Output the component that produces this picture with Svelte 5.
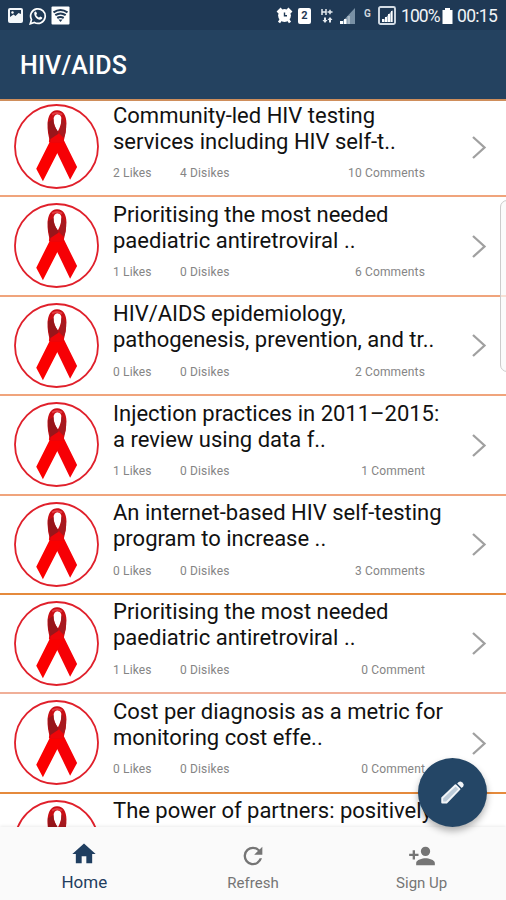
<script>
	const posts = [
		{ lines: ['Community-led HIV testing', 'services including HIV self-t..'], likes: 2, dislikes: 4, comments: 10 },
		{ lines: ['Prioritising the most needed', 'paediatric antiretroviral ..'], likes: 1, dislikes: 0, comments: 6 },
		{ lines: ['HIV/AIDS epidemiology,', 'pathogenesis, prevention, and tr..'], likes: 0, dislikes: 0, comments: 2 },
		{ lines: ['Injection practices in 2011–2015:', 'a review using data f..'], likes: 1, dislikes: 0, comments: 1 },
		{ lines: ['An internet-based HIV self-testing', 'program to increase ..'], likes: 0, dislikes: 0, comments: 3, line: 'strong' },
		{ lines: ['Prioritising the most needed', 'paediatric antiretroviral ..'], likes: 1, dislikes: 0, comments: 0, line: 'pale' },
		{ lines: ['Cost per diagnosis as a metric for', 'monitoring cost effe..'], likes: 0, dislikes: 0, comments: 0, line: 'strong' },
		{ lines: ['The power of partners: positively'] }
	];
</script>

<div class="screen">
	<div class="status">
		<svg class="pic" width="17" height="17" viewBox="0 0 17 17">
			<rect x="1" y="1" width="15" height="15" rx="2" fill="#f4f7fa" />
			<path d="M3 3h11v4l-2.500-1-3 3-2-1.500L3 10z" fill="#1f3854" />
			<circle cx="5.500" cy="5.500" r="1.200" fill="#fff" />
		</svg>
		<svg class="whats" width="18" height="18" viewBox="0 0 18 18">
			<path d="M1.300 16.800l1.200-4.200a7.300 7.300 0 1 1 2.900 2.900z" fill="none" stroke="#fff" stroke-width="1.700" />
			<path d="M5.400 5.300c.8-1.200 1.700-1 2 0l.6 1.500-.8 1.100c.7 1.300 1.600 2.100 2.900 2.700l1.100-1.100 2 1c.4.9-.9 2.300-2.500 2.300-2.700-.2-6.300-4-5.300-7.500z" fill="#fff" />
		</svg>
		<svg class="wifi" width="19" height="19" viewBox="0 0 19 19">
			<rect x=".5" y=".5" width="18" height="18" rx="1" fill="#fff" />
			<g fill="none" stroke="#1f3854" stroke-width="2.100">
				<path d="M2.500 6.300q7-4.700 14 0" />
				<path d="M4.300 9.200q5.200-3.400 10.400 0" />
				<path d="M6.300 12q3.200-2 6.400 0" />
			</g>
			<path d="M7.500 13.500h4l-2 2.500z" fill="#1f3854" />
		</svg>
		<span class="grow"></span>
		<svg class="alarm" width="17" height="17" viewBox="0 0 17 17">
			<path d="M1.500 5.500l4-4M15.500 5.500l-4-4M3 15.500l2-3M14 15.500l-2-3" stroke="#fff" stroke-width="2.600" />
			<circle cx="8.500" cy="8.500" r="6.400" fill="#fff" />
			<path d="M8.500 5.500v3.300h2.500" fill="none" stroke="#1f3854" stroke-width="1.400" />
		</svg>
		<span class="sim">2</span>
		<svg class="data" width="12" height="16" viewBox="0 0 12 16">
			<path d="M1 1v6M5 1v6M1 4h4M6.500 4h5M9 1.800v4.400" stroke="#e6ebf0" stroke-width="1.500" />
			<path d="M1.500 12L4 15l2.500-3H5V9.500H3V12zM6.500 12L9 9l2.500 3H10v2.500H8V12z" fill="#e6ebf0" />
		</svg>
		<svg class="signal" width="17" height="16" viewBox="0 0 17 16">
			<path d="M16 0v16H1z" fill="#7890a5" />
			<path d="M1 13h3v3H1zM5 11h2.500v5H5z" fill="#fff" />
			<path d="M8.500 8H11v8H8.500z" fill="#a9b8c5" />
		</svg>
		<span class="g">G</span>
		<svg class="signal-box" width="18" height="19" viewBox="0 0 18 19">
			<rect x="1" y="1" width="16" height="17" rx="1.500" fill="none" stroke="#d3dce5" stroke-width="1.900" />
			<path d="M14.500 4v12H4z" fill="#a2b2c0" />
			<path d="M4 13h2v3H4zM7 11h2v5H7zM10 8h2v8h-2zM13 5h1.500v11H13z" fill="#fff" />
		</svg>
		<span class="battery-text">100%</span>
		<svg class="battery" width="11" height="16" viewBox="0 0 11 16">
			<path d="M3 0h5v2h2.500v14H.5V2H3z" fill="#fff" />
		</svg>
		<span class="clock">00:15</span>
	</div>
	<header><h1>HIV/AIDS</h1></header>

	<main>
		{#each posts as post}
			<article class={post.line}>
				<svg class="ribbon" viewBox="13 11 256 256">
					<circle cx="141" cy="139" r="125" fill="#fff" stroke="#e0202b" stroke-width="5.500" />
					<g transform="translate(72 18)">
						<!-- strand running to the right foot, then the one over it -->
						<path d="M50 84L86 92L131 183L110 221L70 138L46 106Z" fill="#f60006" />
						<path d="M54 96L84 74L92 106L72 140L28 226L8 188Z" fill="#fb0000" />
						<!-- loop with its darker inner side -->
						<path fill-rule="evenodd" d="M70 12C88 11 99 26 99 52Q99 78 90 108L50 108Q41 78 42 54C43 28 53 13 70 12ZM72 24Q61 25 60 40Q60 58 73 76Q84 55 84 38Q83 25 72 24Z" fill="#c90e15" />
						<path d="M43 48Q42 75 50 99Q62 103 74 88L75 78Q59 59 60 38Z" fill="#98151a" />
						<path d="M84 36Q97 46 98 62Q97 80 91 95L76 78Q84 60 84 36Z" fill="#a71a20" />
						<path d="M52 98L76 82L91 96L90 110H50Z" fill="#ef0509" />
						<path d="M56 25Q69 15 86 25" fill="none" stroke="#e43c42" stroke-width="6" />
					</g>
				</svg>
				<div class="body">
					<h2>
						{#each post.lines as line}
							<span>{line}</span>
						{/each}
					</h2>
					{#if post.likes !== undefined}
						<div class="stats">
							<span class="likes">{post.likes} Likes</span>
							<span>{post.dislikes} Disikes</span>
							<span class="comments">{post.comments} {post.comments > 1 ? 'Comments' : 'Comment'}</span>
						</div>
					{/if}
				</div>
				<svg class="chevron" width="16" height="25" viewBox="0 0 16 25">
					<path d="M2 2l11.500 10.500L2 23" fill="none" stroke="#a0a0a0" stroke-width="2.300" />
				</svg>
			</article>
		{/each}
	</main>

	<nav>
		<a class="active" href="#home">
			<svg width="28" height="28" viewBox="0 0 24 24"><path d="M10 20v-6h4v6h5v-8h3L12 3 2 12h3v8z" fill="currentColor" /></svg>
			<span>Home</span>
		</a>
		<a href="#refresh">
			<svg width="28" height="28" viewBox="0 0 24 24"><path d="M17.650 6.350A7.960 7.960 0 0 0 12 4a8 8 0 1 0 7.730 10h-2.080A6 6 0 1 1 12 6c1.660 0 3.140.69 4.220 1.780L13 11h7V4z" fill="currentColor" /></svg>
			<span>Refresh</span>
		</a>
		<a href="#signup">
			<svg width="28" height="28" viewBox="0 0 24 24"><path d="M15 12a4 4 0 1 0 0-8 4 4 0 0 0 0 8zm-9-2V7H4v3H1v2h3v3h2v-3h3v-2zm9 4c-2.670 0-8 1.340-8 4v2h16v-2c0-2.660-5.330-4-8-4z" fill="currentColor" /></svg>
			<span>Sign Up</span>
		</a>
	</nav>

	<div class="edge-panel"></div>
	<button class="fab" aria-label="Write">
		<svg width="28" height="28" viewBox="0 0 28 28">
			<path d="M3.200 24.500V20L16.500 7.200l4 4L7.500 24.500z" fill="#bccbd8" stroke="#f2f5f8" stroke-width="1.900" stroke-linejoin="round" />
			<path d="M18.200 5.500l1.500-1.500q1.800-1.300 3.300.2l1 1q1.500 1.500.2 3.300l-1.500 1.500z" fill="#f2f5f8" />
		</svg>
	</button>
</div>

<style>
	:global(body) {
		margin: 0;
	}
	.screen {
		position: relative;
		display: flex;
		flex-direction: column;
		width: 506px;
		height: 900px;
		overflow: hidden;
		background: #fff;
		font-family: Roboto, sans-serif;
	}
	.status {
		display: flex;
		align-items: center;
		box-sizing: border-box;
		flex: none;
		height: 30px;
		padding: 1px 7px 0 7px;
		background: #1f3955;
		color: #f1f4f7;
	}
	.status svg {
		flex: none;
	}
	.whats {
		margin-left: 5px;
	}
	.wifi {
		margin-left: 4px;
	}
	.grow {
		flex: 1;
	}
	.sim {
		width: 13px;
		height: 16px;
		margin-left: 5px;
		border-radius: 2px;
		background: #fff;
		color: #1f3955;
		font: bold 11px/16px Roboto, sans-serif;
		text-align: center;
	}
	.data {
		margin-left: 10px;
	}
	.signal {
		margin-left: 6px;
	}
	.g {
		width: 8px;
		height: 17px;
		margin-left: 8px;
		color: #cdd6de;
		font: bold 10px/14px Roboto, sans-serif;
	}
	.signal-box {
		margin-left: 6px;
	}
	.battery-text {
		width: 37px;
		margin-left: 5px;
		font-size: 17.500px;
		letter-spacing: -0.900px;
	}
	.battery {
		margin-left: 4px;
	}
	.clock {
		width: 42px;
		margin-left: 4px;
		font-size: 17.500px;
		letter-spacing: -0.700px;
	}
	header {
		display: flex;
		align-items: center;
		flex: none;
		height: 69px;
		padding: 0 20px;
		background: #244260;
	}
	h1 {
		margin: 2px 0 0;
		color: #fff;
		font-size: 25px;
		font-weight: 500;
		line-height: 30px;
		letter-spacing: 0.150px;
	}
	main {
		flex: 1;
		min-height: 0;
		overflow: hidden;
		border-top: 2px solid #cf8e5b;
	}
	article {
		display: flex;
		box-sizing: border-box;
		height: 99.400px;
		padding: 5px 19px 0 14px;
		border-bottom: 2.400px solid #f0a47c;
	}
	article:first-child {
		height: 96.400px;
		padding-top: 2px;
	}
	article.strong {
		border-color: #e58a3c;
	}
	article.pale {
		border-color: #f0af98;
	}
	.ribbon {
		flex: none;
		width: 85px;
		height: 85px;
		margin-top: 1px;
	}
	.body {
		width: 312px;
		margin: -0.500px 0 0 14px;
		flex: none;
	}
	h2 {
		margin: 0;
		color: #111;
		font-size: 22px;
		font-weight: 400;
		line-height: 26px;
		white-space: nowrap;
	}
	h2 span {
		display: block;
	}
	.stats {
		display: flex;
		margin-top: 10.500px;
		color: #858585;
		font-size: 12px;
		line-height: 16px;
		letter-spacing: 0.150px;
	}
	.likes {
		width: 67px;
	}
	.comments {
		margin-left: auto;
	}
	.chevron {
		margin: 31.500px 0 0 auto;
	}
	nav {
		display: flex;
		flex: none;
		height: 73px;
		background: #fafafa;
		box-shadow: 0 -1px 3px rgba(0, 0, 0, 0.08);
	}
	nav a {
		display: flex;
		flex: 1;
		flex-direction: column;
		align-items: center;
		padding-top: 15px;
		color: #757575;
		font-size: 15px;
		text-decoration: none;
	}
	nav span {
		margin-top: 4px;
		line-height: 18px;
	}
	nav .active {
		padding-top: 13px;
		color: #1f3e60;
		font-size: 17px;
	}
	.active span {
		margin-top: 5px;
	}
	.edge-panel {
		position: absolute;
		top: 200px;
		right: -8px;
		width: 12px;
		height: 170px;
		border: 1px solid #ccc;
		border-radius: 7px;
		background: rgba(250, 250, 250, 0.700);
	}
	.fab {
		position: absolute;
		top: 757.500px;
		left: 418px;
		display: flex;
		align-items: center;
		justify-content: center;
		width: 69px;
		height: 69px;
		padding: 0;
		border: 0;
		border-radius: 50%;
		background: #244666;
		box-shadow: 0 4px 7px rgba(0, 0, 0, 0.300);
	}
</style>
